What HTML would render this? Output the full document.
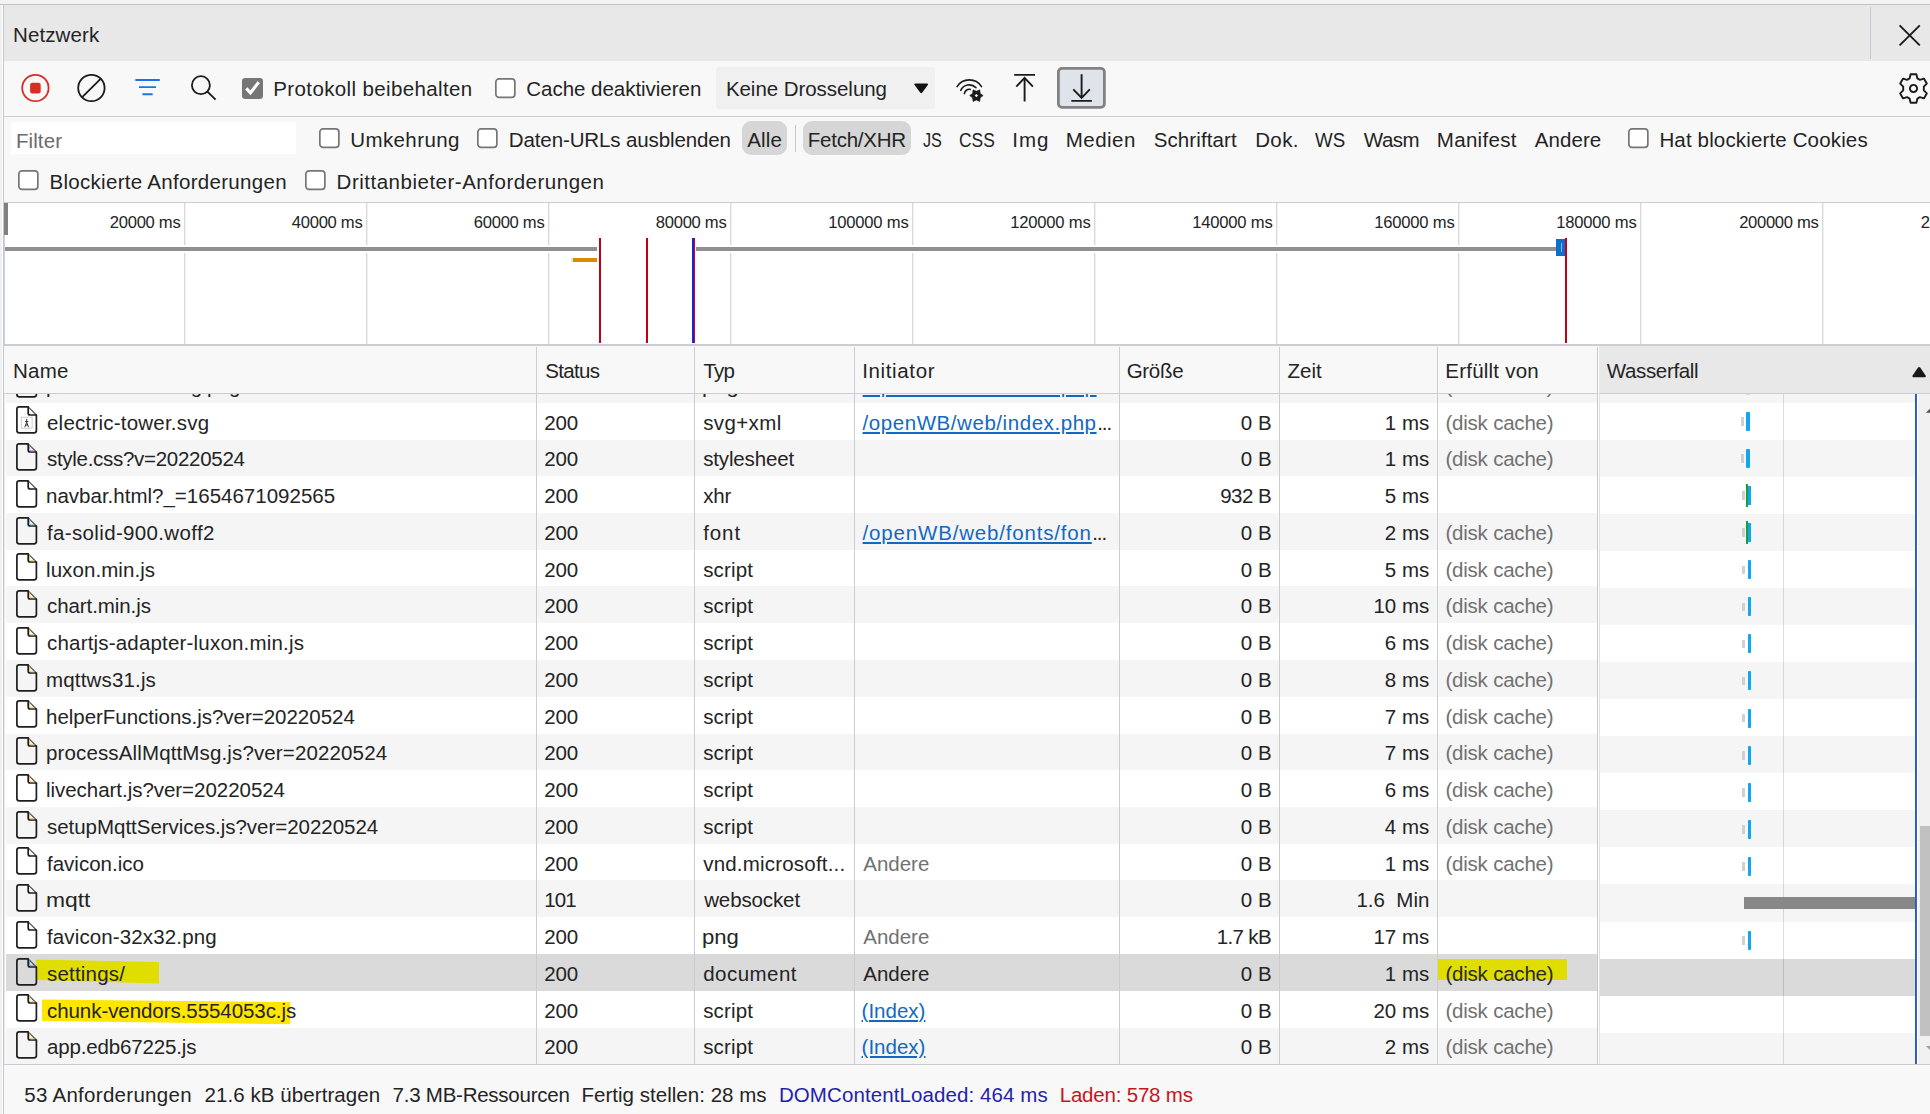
<!DOCTYPE html>
<html><head><meta charset="utf-8"><title>Netzwerk</title>
<style>
html,body{margin:0;padding:0}
body{width:1930px;height:1114px;position:relative;overflow:hidden;background:#fff;font-family:"Liberation Sans", sans-serif;}
body>div,body>svg,body>span{position:absolute;box-sizing:content-box}
.t{line-height:24px;white-space:pre;font-family:"Liberation Sans", sans-serif}
</style></head><body>
<div style="left:0px;top:0px;width:1930px;height:4px;background:#f3f3f3;"></div>
<div style="left:0px;top:4px;width:1930px;height:1px;background:#c2c2c2;"></div>
<div style="left:0px;top:5px;width:2px;height:1109px;background:#f0f0f0;"></div>
<div style="left:3px;top:5px;width:1px;height:1109px;background:#c3c6cc;"></div>
<div style="left:4px;top:5px;width:1px;height:1109px;background:#e6e8ec;"></div>
<div style="left:4px;top:5px;width:1926px;height:56px;background:#e8e8e8;"></div>
<div style="left:1870px;top:7px;width:1px;height:52px;background:#c6c9cf;"></div>
<span class="t" style="left:13.00px;top:22.70px;font-size:20.5px;color:#242424;letter-spacing:0.117px;">Netzwerk</span>
<svg style="left:1897px;top:23px" width="26" height="26" viewBox="0 0 26 26"><path d="M2.6 2.4 L22.8 22.4 M22.8 2.4 L2.6 22.4" stroke="#1b1b1b" stroke-width="1.9" fill="none"/></svg>
<div style="left:4px;top:61px;width:1926px;height:55px;background:#f8f8f8;"></div>
<div style="left:4px;top:116px;width:1926px;height:1px;background:#cbcdd1;"></div>
<svg style="left:19px;top:72px" width="33" height="33" viewBox="0 0 33 33"><circle cx="16.4" cy="16" r="13.2" fill="none" stroke="#d92c25" stroke-width="1.8"/><rect x="11.1" y="10.8" width="10.6" height="10.6" rx="2.2" fill="#d92c25"/></svg>
<svg style="left:75px;top:72px" width="33" height="33" viewBox="0 0 33 33"><circle cx="16.4" cy="16" r="13.2" fill="none" stroke="#1b1b1b" stroke-width="1.8"/><path d="M7.2 25.2 L25.6 6.8" stroke="#1b1b1b" stroke-width="1.8"/></svg>
<svg style="left:132px;top:74px" width="32" height="26" viewBox="0 0 32 26"><path d="M3.3 6 H27.8 M7 13.1 H24 M10.4 20.2 H20.7" stroke="#1a73e8" stroke-width="1.9" fill="none"/></svg>
<svg style="left:186px;top:71px" width="34" height="34" viewBox="0 0 34 34"><circle cx="14.9" cy="14.2" r="9" fill="none" stroke="#1b1b1b" stroke-width="1.8"/><path d="M21.4 20.6 L29.6 28.6" stroke="#1b1b1b" stroke-width="1.9"/></svg>
<svg style="left:242px;top:78px" width="21" height="21" viewBox="0 0 21 21"><rect x="0" y="0" width="21" height="21" rx="3.2" fill="#767676"/><path d="M4.3 10.4 L8.4 14.8 L16.7 4.2" stroke="#fff" stroke-width="3.1" fill="none"/></svg>
<span class="t" style="left:273.30px;top:76.90px;font-size:20.5px;color:#242424;letter-spacing:0.372px;">Protokoll beibehalten</span>
<svg style="left:495px;top:78px" width="21" height="21" viewBox="0 0 21 21"><rect x="0.85" y="0.85" width="19" height="18.6" rx="3.2" fill="#fff" stroke="#767676" stroke-width="1.7"/></svg>
<span class="t" style="left:526.30px;top:76.90px;font-size:20.5px;color:#242424;letter-spacing:-0.029px;">Cache deaktivieren</span>
<div style="left:716px;top:67px;width:219px;height:41.5px;background:#f0f0f0;border-radius:3.5px"></div>
<span class="t" style="left:725.90px;top:76.90px;font-size:20.5px;color:#242424;letter-spacing:-0.048px;">Keine Drosselung</span>
<svg style="left:912px;top:81px" width="18" height="14" viewBox="0 0 18 14"><path d="M3.2 2.4 H15.2 Q16.8 2.4 15.8 3.9 L10.3 11.6 Q9.2 13 8.1 11.6 L2.6 3.9 Q1.6 2.4 3.2 2.4 Z" fill="#111"/></svg>
<svg style="left:955px;top:76px" width="30" height="28" viewBox="0 0 30 28">
<g fill="none" stroke="#1b1b1b" stroke-width="1.6" stroke-linecap="round">
<path d="M2.09 10.67 A14.4 14.4 0 0 1 26.51 10.67"/><path d="M5.78 14.33 A9.4 9.4 0 0 1 20.95 11.65"/><path d="M9.35 17.60 A5.0 5.0 0 0 1 15.17 13.38"/></g>
<g transform="translate(21.4,19.6)"><path d="M6.70 0.00 L3.81 2.20 L3.35 5.80 L0.00 4.40 L-3.35 5.80 L-3.81 2.20 L-6.70 0.00 L-3.81 -2.20 L-3.35 -5.80 L-0.00 -4.40 L3.35 -5.80 L3.81 -2.20 Z" fill="#1b1b1b" stroke="#1b1b1b" stroke-width="0.6" stroke-linejoin="round"/><path d="M0 -1.7 L1.7 0 L0 1.7 L-1.7 0 Z" fill="#f8f8f8"/></g></svg>
<svg style="left:1012px;top:72px" width="26" height="32" viewBox="0 0 26 32"><path d="M2.2 2.9 H23 M12.6 5.6 V29.6 M4.3 14.6 L12.6 5.9 L20.9 14.6" stroke="#1b1b1b" stroke-width="1.9" fill="none"/></svg>
<svg style="left:1057px;top:67px" width="50" height="42" viewBox="0 0 50 42"><rect x="1.4" y="1.4" width="46" height="38.9" rx="3.6" fill="#dfe3ea" stroke="#828282" stroke-width="2.8"/></svg>
<svg style="left:1069px;top:72px" width="26" height="32" viewBox="0 0 26 32"><path d="M12.6 2.2 V26 M4.3 17.4 L12.6 26 L20.8 17.4 M2.3 28.9 H22.9" stroke="#1b1b1b" stroke-width="1.9" fill="none"/></svg>
<svg style="left:1897px;top:72px" width="33" height="33" viewBox="-16.5 -16.5 33 33"><g fill="none" stroke="#1b1b1b" stroke-width="1.9" stroke-linejoin="round">
<path d="M-2.9 -14.2 H2.9 L3.9 -10.1 L6.4 -8.7 L10.4 -9.9 L13.3 -4.9 L10.3 -1.9 V1.9 L13.3 4.9 L10.4 9.9 L6.4 8.7 L3.9 10.1 L2.9 14.2 H-2.9 L-3.9 10.1 L-6.4 8.7 L-10.4 9.9 L-13.3 4.9 L-10.3 1.9 V-1.9 L-13.3 -4.9 L-10.4 -9.9 L-6.4 -8.7 L-3.9 -10.1 Z"/><circle r="3.6"/></g></svg>
<div style="left:4px;top:117px;width:1926px;height:85px;background:#f8f8f8;"></div>
<div style="left:4px;top:202px;width:1926px;height:1px;background:#cbcdd1;"></div>
<div style="left:11px;top:122px;width:285px;height:32px;background:#fff;"></div>
<span class="t" style="left:15.90px;top:128.50px;font-size:20.5px;color:#6b6b6b;letter-spacing:0.114px;">Filter</span>
<svg style="left:319.2px;top:128.2px" width="21" height="21" viewBox="0 0 21 21"><rect x="0.85" y="0.85" width="19" height="18.6" rx="3.2" fill="#fff" stroke="#767676" stroke-width="1.7"/></svg>
<span class="t" style="left:350.20px;top:128.30px;font-size:20.5px;color:#242424;letter-spacing:0.405px;">Umkehrung</span>
<svg style="left:476.9px;top:128.2px" width="21" height="21" viewBox="0 0 21 21"><rect x="0.85" y="0.85" width="19" height="18.6" rx="3.2" fill="#fff" stroke="#767676" stroke-width="1.7"/></svg>
<span class="t" style="left:508.80px;top:128.30px;font-size:20.5px;color:#242424;letter-spacing:-0.115px;">Daten-URLs ausblenden</span>
<div style="left:741.8px;top:121.2px;width:44.8px;height:34.3px;background:#d6d6d6;border-radius:9px"></div>
<span class="t" style="left:747.30px;top:128.30px;font-size:20.5px;color:#242424;letter-spacing:0.106px;">Alle</span>
<div style="left:795px;top:124.5px;width:1px;height:27.5px;background:#c8c8c8;"></div>
<div style="left:803.3px;top:121.2px;width:107.4px;height:34.3px;background:#d6d6d6;border-radius:9px"></div>
<span class="t" style="left:807.80px;top:128.30px;font-size:20.5px;color:#242424;letter-spacing:-0.243px;">Fetch/XHR</span>
<span class="t" style="left:923.10px;top:128.30px;font-size:20.5px;color:#242424;transform:scaleX(0.7914);transform-origin:0 0;">JS</span>
<span class="t" style="left:958.85px;top:128.30px;font-size:20.5px;color:#242424;transform:scaleX(0.8474);transform-origin:0 0;">CSS</span>
<span class="t" style="left:1012.20px;top:128.30px;font-size:20.5px;color:#242424;letter-spacing:1.014px;">Img</span>
<span class="t" style="left:1065.70px;top:128.30px;font-size:20.5px;color:#242424;letter-spacing:0.493px;">Medien</span>
<span class="t" style="left:1153.70px;top:128.30px;font-size:20.5px;color:#242424;letter-spacing:0.108px;">Schriftart</span>
<span class="t" style="left:1255.20px;top:128.30px;font-size:20.5px;color:#242424;letter-spacing:0.381px;">Dok.</span>
<span class="t" style="left:1315.00px;top:128.30px;font-size:20.5px;color:#242424;transform:scaleX(0.9119);transform-origin:0 0;">WS</span>
<span class="t" style="left:1363.80px;top:128.30px;font-size:20.5px;color:#242424;letter-spacing:-0.480px;">Wasm</span>
<span class="t" style="left:1436.80px;top:128.30px;font-size:20.5px;color:#242424;letter-spacing:0.303px;">Manifest</span>
<span class="t" style="left:1534.70px;top:128.30px;font-size:20.5px;color:#242424;letter-spacing:0.079px;">Andere</span>
<svg style="left:1628.3px;top:128.2px" width="21" height="21" viewBox="0 0 21 21"><rect x="0.85" y="0.85" width="19" height="18.6" rx="3.2" fill="#fff" stroke="#767676" stroke-width="1.7"/></svg>
<span class="t" style="left:1659.40px;top:128.30px;font-size:20.5px;color:#242424;letter-spacing:0.150px;">Hat blockierte Cookies</span>
<svg style="left:18.2px;top:170.3px" width="21" height="21" viewBox="0 0 21 21"><rect x="0.85" y="0.85" width="19" height="18.6" rx="3.2" fill="#fff" stroke="#767676" stroke-width="1.7"/></svg>
<span class="t" style="left:49.50px;top:169.80px;font-size:20.5px;color:#242424;letter-spacing:0.298px;">Blockierte Anforderungen</span>
<svg style="left:305.2px;top:170.3px" width="21" height="21" viewBox="0 0 21 21"><rect x="0.85" y="0.85" width="19" height="18.6" rx="3.2" fill="#fff" stroke="#767676" stroke-width="1.7"/></svg>
<span class="t" style="left:336.60px;top:169.80px;font-size:20.5px;color:#242424;letter-spacing:0.507px;">Drittanbieter-Anforderungen</span>
<div style="left:4px;top:203px;width:1926px;height:141px;background:#fff;"></div>
<div style="left:4px;top:344px;width:1926px;height:2px;background:#cbcdd1;"></div>
<div style="left:184px;top:203px;width:1px;height:141px;background:#d9d9d9;"></div>
<div style="left:185px;top:203px;width:1px;height:141px;background:#f0f0f0;"></div>
<span class="t" style="left:109.80px;top:211.15px;font-size:16.6px;color:#242424;letter-spacing:-0.282px;">20000 ms</span>
<div style="left:366px;top:203px;width:1px;height:141px;background:#d9d9d9;"></div>
<div style="left:367px;top:203px;width:1px;height:141px;background:#f0f0f0;"></div>
<span class="t" style="left:291.80px;top:211.15px;font-size:16.6px;color:#242424;letter-spacing:-0.282px;">40000 ms</span>
<div style="left:548px;top:203px;width:1px;height:141px;background:#d9d9d9;"></div>
<div style="left:549px;top:203px;width:1px;height:141px;background:#f0f0f0;"></div>
<span class="t" style="left:473.80px;top:211.15px;font-size:16.6px;color:#242424;letter-spacing:-0.282px;">60000 ms</span>
<div style="left:730px;top:203px;width:1px;height:141px;background:#d9d9d9;"></div>
<div style="left:731px;top:203px;width:1px;height:141px;background:#f0f0f0;"></div>
<span class="t" style="left:655.80px;top:211.15px;font-size:16.6px;color:#242424;letter-spacing:-0.282px;">80000 ms</span>
<div style="left:912px;top:203px;width:1px;height:141px;background:#d9d9d9;"></div>
<div style="left:913px;top:203px;width:1px;height:141px;background:#f0f0f0;"></div>
<span class="t" style="left:828.20px;top:211.15px;font-size:16.6px;color:#242424;letter-spacing:-0.201px;">100000 ms</span>
<div style="left:1094px;top:203px;width:1px;height:141px;background:#d9d9d9;"></div>
<div style="left:1095px;top:203px;width:1px;height:141px;background:#f0f0f0;"></div>
<span class="t" style="left:1010.20px;top:211.15px;font-size:16.6px;color:#242424;letter-spacing:-0.201px;">120000 ms</span>
<div style="left:1276px;top:203px;width:1px;height:141px;background:#d9d9d9;"></div>
<div style="left:1277px;top:203px;width:1px;height:141px;background:#f0f0f0;"></div>
<span class="t" style="left:1192.20px;top:211.15px;font-size:16.6px;color:#242424;letter-spacing:-0.201px;">140000 ms</span>
<div style="left:1458px;top:203px;width:1px;height:141px;background:#d9d9d9;"></div>
<div style="left:1459px;top:203px;width:1px;height:141px;background:#f0f0f0;"></div>
<span class="t" style="left:1374.20px;top:211.15px;font-size:16.6px;color:#242424;letter-spacing:-0.201px;">160000 ms</span>
<div style="left:1640px;top:203px;width:1px;height:141px;background:#d9d9d9;"></div>
<div style="left:1641px;top:203px;width:1px;height:141px;background:#f0f0f0;"></div>
<span class="t" style="left:1556.20px;top:211.15px;font-size:16.6px;color:#242424;letter-spacing:-0.201px;">180000 ms</span>
<div style="left:1822px;top:203px;width:1px;height:141px;background:#d9d9d9;"></div>
<div style="left:1823px;top:203px;width:1px;height:141px;background:#f0f0f0;"></div>
<span class="t" style="left:1739.20px;top:211.15px;font-size:16.6px;color:#242424;letter-spacing:-0.326px;">200000 ms</span>
<span class="t" style="left:1920.70px;top:211.15px;font-size:16.6px;color:#242424;letter-spacing:0.000px;">2</span>
<div style="left:4px;top:245px;width:593px;height:2px;background:#fff;"></div>
<div style="left:4px;top:251px;width:593px;height:2px;background:#fff;"></div>
<div style="left:695.5px;top:245px;width:861px;height:2px;background:#fff;"></div>
<div style="left:695.5px;top:251px;width:861px;height:2px;background:#fff;"></div>
<div style="left:4px;top:247px;width:593px;height:4px;background:#909090;"></div>
<div style="left:695.5px;top:247px;width:861px;height:4px;background:#909090;"></div>
<div style="left:4px;top:203px;width:4px;height:32px;background:#808080;"></div>
<div style="left:4px;top:235px;width:1px;height:109px;background:#c3d4ee;"></div>
<div style="left:570.5px;top:258px;width:2.5px;height:4px;background:#d6e6ea;"></div>
<div style="left:573px;top:258px;width:24px;height:4px;background:#dd8a00;"></div>
<div style="left:599px;top:238px;width:2px;height:105px;background:#c00018;"></div>
<div style="left:646px;top:238px;width:2px;height:105px;background:#c00018;"></div>
<div style="left:692px;top:238px;width:1.6px;height:105px;background:#2222c8;"></div>
<div style="left:693.6px;top:238px;width:1.6px;height:105px;background:#d00020;"></div>
<div style="left:1556px;top:239px;width:9px;height:17px;background:#0b6fd0;"></div>
<div style="left:1560.5px;top:242.5px;width:1.2px;height:9px;background:#9ab0c0;"></div>
<div style="left:1564.8px;top:238px;width:2px;height:105px;background:#c00018;"></div>
<div style="left:6px;top:380px;width:1591px;height:22.75px;background:#f5f5f5;"></div>
<div style="left:1600px;top:380px;width:315px;height:22.80000000000001px;background:#f5f5f5;"></div>
<svg style="left:16.4px;top:369.5px" width="22" height="28" viewBox="0 0 22 28"><path d="M12.2 0.9 L20.4 9" fill="none" stroke="#4a4a4a" stroke-width="1.1"/><path d="M12.2 0.9 H3.2 Q0.9 0.9 0.9 3.2 V24.6 Q0.9 26.9 3.2 26.9 H18.1 Q20.4 26.9 20.4 24.6 V9 H14.2 Q12.2 9 12.2 7 Z" fill="none" stroke="#1e1e1e" stroke-width="1.7" stroke-linejoin="round"/></svg>
<span class="t" style="left:46.00px;top:373.90px;font-size:20.5px;color:#242424;letter-spacing:-0.385px;">power-connecting.png</span>
<span class="t" style="left:544.30px;top:373.90px;font-size:20.5px;color:#242424;letter-spacing:-0.201px;">200</span>
<span class="t" style="left:702.12px;top:373.90px;font-size:20.5px;color:#242424;transform:scaleX(1.0792);transform-origin:0 0;">png</span>
<span class="t" style="left:862.60px;top:373.90px;font-size:20.5px;color:#1369bf;letter-spacing:0.559px;text-decoration:underline;text-decoration-thickness:1.5px;text-underline-offset:1.8px">/openWB/web/index.php</span>
<span class="t" style="left:1097.20px;top:373.90px;font-size:20.5px;color:#222;letter-spacing:-1.096px;">...</span>
<span class="t" style="left:1240.80px;top:373.90px;font-size:20.5px;color:#242424;letter-spacing:0.000px;">0 B</span>
<span class="t" style="left:1384.83px;top:373.90px;font-size:20.5px;color:#242424;letter-spacing:0.000px;">1 ms</span>
<span class="t" style="left:1445.40px;top:373.90px;font-size:20.5px;color:#717171;letter-spacing:-0.207px;">(disk cache)</span>
<div style="left:1745.6px;top:380px;width:4.1px;height:15px;background:#bfe6fb;"></div>
<div style="left:4px;top:346px;width:1594px;height:47px;background:#f8f8f8;"></div>
<div style="left:1599px;top:346px;width:331px;height:47px;background:#e8e8e8;"></div>
<div style="left:4px;top:393px;width:1926px;height:1px;background:#cbcdd1;"></div>
<span class="t" style="left:13.10px;top:358.80px;font-size:20.5px;color:#242424;letter-spacing:0.206px;">Name</span>
<span class="t" style="left:545.30px;top:358.80px;font-size:20.5px;color:#242424;letter-spacing:-0.693px;">Status</span>
<span class="t" style="left:703.40px;top:358.80px;font-size:20.5px;color:#242424;letter-spacing:-0.771px;">Typ</span>
<span class="t" style="left:862.20px;top:358.80px;font-size:20.5px;color:#242424;letter-spacing:0.638px;">Initiator</span>
<span class="t" style="left:1126.70px;top:358.80px;font-size:20.5px;color:#242424;letter-spacing:-0.299px;">Größe</span>
<span class="t" style="left:1287.60px;top:358.80px;font-size:20.5px;color:#242424;letter-spacing:-0.026px;">Zeit</span>
<span class="t" style="left:1445.30px;top:358.80px;font-size:20.5px;color:#242424;letter-spacing:0.225px;">Erfüllt von</span>
<span class="t" style="left:1606.70px;top:359.40px;font-size:20.5px;color:#242424;letter-spacing:-0.330px;">Wasserfall</span>
<svg style="left:1910px;top:365px" width="18" height="14" viewBox="0 0 18 14"><path d="M3.4 12.2 H14.8 Q16.6 12.2 15.6 10.6 L10.2 2.6 Q9.1 1.2 8 2.6 L2.6 10.6 Q1.6 12.2 3.4 12.2 Z" fill="#1a1a1a"/></svg>
<div style="left:6px;top:403px;width:1591px;height:37px;background:#fff;"></div>
<div style="left:1600px;top:403px;width:315px;height:37px;background:#fff;"></div>
<div style="left:6px;top:440px;width:1591px;height:36px;background:#f5f5f5;"></div>
<div style="left:1600px;top:440px;width:315px;height:37px;background:#f5f5f5;"></div>
<div style="left:6px;top:476px;width:1591px;height:37px;background:#fff;"></div>
<div style="left:1600px;top:477px;width:315px;height:37px;background:#fff;"></div>
<div style="left:6px;top:513px;width:1591px;height:37px;background:#f5f5f5;"></div>
<div style="left:1600px;top:514px;width:315px;height:37px;background:#f5f5f5;"></div>
<div style="left:6px;top:550px;width:1591px;height:36px;background:#fff;"></div>
<div style="left:1600px;top:551px;width:315px;height:37px;background:#fff;"></div>
<div style="left:6px;top:586px;width:1591px;height:37px;background:#f5f5f5;"></div>
<div style="left:1600px;top:588px;width:315px;height:37px;background:#f5f5f5;"></div>
<div style="left:6px;top:623px;width:1591px;height:37px;background:#fff;"></div>
<div style="left:1600px;top:625px;width:315px;height:37px;background:#fff;"></div>
<div style="left:6px;top:660px;width:1591px;height:37px;background:#f5f5f5;"></div>
<div style="left:1600px;top:662px;width:315px;height:37px;background:#f5f5f5;"></div>
<div style="left:6px;top:697px;width:1591px;height:37px;background:#fff;"></div>
<div style="left:1600px;top:699px;width:315px;height:37px;background:#fff;"></div>
<div style="left:6px;top:734px;width:1591px;height:36px;background:#f5f5f5;"></div>
<div style="left:1600px;top:736px;width:315px;height:37px;background:#f5f5f5;"></div>
<div style="left:6px;top:770px;width:1591px;height:37px;background:#fff;"></div>
<div style="left:1600px;top:773px;width:315px;height:37px;background:#fff;"></div>
<div style="left:6px;top:807px;width:1591px;height:37px;background:#f5f5f5;"></div>
<div style="left:1600px;top:810px;width:315px;height:37px;background:#f5f5f5;"></div>
<div style="left:6px;top:844px;width:1591px;height:36px;background:#fff;"></div>
<div style="left:1600px;top:847px;width:315px;height:37px;background:#fff;"></div>
<div style="left:6px;top:880px;width:1591px;height:37px;background:#f5f5f5;"></div>
<div style="left:1600px;top:884px;width:315px;height:38px;background:#f5f5f5;"></div>
<div style="left:6px;top:917px;width:1591px;height:37px;background:#fff;"></div>
<div style="left:1600px;top:922px;width:315px;height:37px;background:#fff;"></div>
<div style="left:6px;top:954px;width:1591px;height:37px;background:#dadada;"></div>
<div style="left:1600px;top:959px;width:315px;height:37px;background:#dadada;"></div>
<div style="left:6px;top:991px;width:1591px;height:37px;background:#fff;"></div>
<div style="left:1600px;top:996px;width:315px;height:37px;background:#fff;"></div>
<div style="left:6px;top:1028px;width:1591px;height:36px;background:#f5f5f5;"></div>
<div style="left:1600px;top:1033px;width:315px;height:31px;background:#f5f5f5;"></div>
<svg style="left:0;top:950px" width="320" height="90" viewBox="0 950 320 90"><path d="M36 959.5 L159 962 L159 983.5 L36 980 Z" fill="#e0de00"/><path d="M42 999.5 L290.3 1002 L290.3 1024.2 L42 1021 Z" fill="#ffe600"/></svg>
<div style="left:1436.5px;top:959px;width:130.5px;height:21px;background:#e0de00;"></div>
<svg style="left:16.4px;top:406.25px" width="22" height="28" viewBox="0 0 22 28"><path d="M12.2 0.9 L20.4 9" fill="none" stroke="#4a4a4a" stroke-width="1.1"/><path d="M12.2 0.9 H3.2 Q0.9 0.9 0.9 3.2 V24.6 Q0.9 26.9 3.2 26.9 H18.1 Q20.4 26.9 20.4 24.6 V9 H14.2 Q12.2 9 12.2 7 Z" fill="none" stroke="#1e1e1e" stroke-width="1.7" stroke-linejoin="round"/><rect x="5.3" y="11.2" width="10.8" height="11" fill="#fff" stroke="#c4c4c4" stroke-width="0.8"/><path d="M10.7 13 V16.5 M9 15.6 L12.4 15.6 M8.8 21.2 L10.7 16.5 L12.6 21.2 M9.6 19 H11.8" stroke="#333" stroke-width="1" fill="none"/></svg>
<span class="t" style="left:47.00px;top:410.65px;font-size:20.5px;color:#242424;letter-spacing:0.220px;">electric-tower.svg</span>
<span class="t" style="left:544.30px;top:410.65px;font-size:20.5px;color:#242424;letter-spacing:-0.201px;">200</span>
<span class="t" style="left:703.20px;top:410.65px;font-size:20.5px;color:#242424;letter-spacing:0.383px;">svg+xml</span>
<span class="t" style="left:862.60px;top:410.65px;font-size:20.5px;color:#1369bf;letter-spacing:0.559px;text-decoration:underline;text-decoration-thickness:1.5px;text-underline-offset:1.8px">/openWB/web/index.php</span>
<span class="t" style="left:1097.20px;top:410.65px;font-size:20.5px;color:#222;letter-spacing:-1.096px;">...</span>
<span class="t" style="left:1240.80px;top:410.65px;font-size:20.5px;color:#242424;letter-spacing:0.000px;">0 B</span>
<span class="t" style="left:1384.83px;top:410.65px;font-size:20.5px;color:#242424;letter-spacing:0.000px;">1 ms</span>
<span class="t" style="left:1445.40px;top:410.65px;font-size:20.5px;color:#717171;letter-spacing:-0.207px;">(disk cache)</span>
<svg style="left:16.4px;top:443.0px" width="22" height="28" viewBox="0 0 22 28"><path d="M12.2 0.9 L20.4 9" fill="none" stroke="#4a4a4a" stroke-width="1.1"/><path d="M12.2 0.9 H3.2 Q0.9 0.9 0.9 3.2 V24.6 Q0.9 26.9 3.2 26.9 H18.1 Q20.4 26.9 20.4 24.6 V9 H14.2 Q12.2 9 12.2 7 Z" fill="none" stroke="#1e1e1e" stroke-width="1.7" stroke-linejoin="round"/><path d="M13.6 2.4 V6.6 Q13.6 7.8 14.8 7.8 H18.6" stroke="#c070f0" stroke-width="1" stroke-opacity="0.85" fill="none"/></svg>
<span class="t" style="left:47.00px;top:447.40px;font-size:20.5px;color:#242424;letter-spacing:-0.291px;">style.css?v=20220524</span>
<span class="t" style="left:544.30px;top:447.40px;font-size:20.5px;color:#242424;letter-spacing:-0.201px;">200</span>
<span class="t" style="left:703.20px;top:447.40px;font-size:20.5px;color:#242424;letter-spacing:-0.145px;">stylesheet</span>
<span class="t" style="left:1240.80px;top:447.40px;font-size:20.5px;color:#242424;letter-spacing:0.000px;">0 B</span>
<span class="t" style="left:1384.83px;top:447.40px;font-size:20.5px;color:#242424;letter-spacing:0.000px;">1 ms</span>
<span class="t" style="left:1445.40px;top:447.40px;font-size:20.5px;color:#717171;letter-spacing:-0.207px;">(disk cache)</span>
<svg style="left:16.4px;top:479.75px" width="22" height="28" viewBox="0 0 22 28"><path d="M12.2 0.9 L20.4 9" fill="none" stroke="#4a4a4a" stroke-width="1.1"/><path d="M12.2 0.9 H3.2 Q0.9 0.9 0.9 3.2 V24.6 Q0.9 26.9 3.2 26.9 H18.1 Q20.4 26.9 20.4 24.6 V9 H14.2 Q12.2 9 12.2 7 Z" fill="none" stroke="#1e1e1e" stroke-width="1.7" stroke-linejoin="round"/></svg>
<span class="t" style="left:46.00px;top:484.15px;font-size:20.5px;color:#242424;letter-spacing:0.005px;">navbar.html?_=1654671092565</span>
<span class="t" style="left:544.30px;top:484.15px;font-size:20.5px;color:#242424;letter-spacing:-0.201px;">200</span>
<span class="t" style="left:703.20px;top:484.15px;font-size:20.5px;color:#242424;letter-spacing:-0.176px;">xhr</span>
<span class="t" style="left:1220.20px;top:484.15px;font-size:20.5px;color:#242424;letter-spacing:-0.550px;">932 B</span>
<span class="t" style="left:1384.83px;top:484.15px;font-size:20.5px;color:#242424;letter-spacing:0.000px;">5 ms</span>
<svg style="left:16.4px;top:516.5px" width="22" height="28" viewBox="0 0 22 28"><path d="M12.2 0.9 L20.4 9" fill="none" stroke="#4a4a4a" stroke-width="1.1"/><path d="M12.2 0.9 H3.2 Q0.9 0.9 0.9 3.2 V24.6 Q0.9 26.9 3.2 26.9 H18.1 Q20.4 26.9 20.4 24.6 V9 H14.2 Q12.2 9 12.2 7 Z" fill="none" stroke="#1e1e1e" stroke-width="1.7" stroke-linejoin="round"/><path d="M13.6 2.4 V6.6 Q13.6 7.8 14.8 7.8 H18.6" stroke="#5ab8e8" stroke-width="1" stroke-opacity="0.85" fill="none"/></svg>
<span class="t" style="left:47.00px;top:520.90px;font-size:20.5px;color:#242424;letter-spacing:0.351px;">fa-solid-900.woff2</span>
<span class="t" style="left:544.30px;top:520.90px;font-size:20.5px;color:#242424;letter-spacing:-0.201px;">200</span>
<span class="t" style="left:703.20px;top:520.90px;font-size:20.5px;color:#242424;letter-spacing:0.901px;">font</span>
<span class="t" style="left:862.60px;top:520.90px;font-size:20.5px;color:#1369bf;letter-spacing:0.822px;text-decoration:underline;text-decoration-thickness:1.5px;text-underline-offset:1.8px">/openWB/web/fonts/fon</span>
<span class="t" style="left:1092.20px;top:520.90px;font-size:20.5px;color:#222;letter-spacing:-1.096px;">...</span>
<span class="t" style="left:1240.80px;top:520.90px;font-size:20.5px;color:#242424;letter-spacing:0.000px;">0 B</span>
<span class="t" style="left:1384.83px;top:520.90px;font-size:20.5px;color:#242424;letter-spacing:0.000px;">2 ms</span>
<span class="t" style="left:1445.40px;top:520.90px;font-size:20.5px;color:#717171;letter-spacing:-0.207px;">(disk cache)</span>
<svg style="left:16.4px;top:553.25px" width="22" height="28" viewBox="0 0 22 28"><path d="M12.2 0.9 L20.4 9" fill="none" stroke="#4a4a4a" stroke-width="1.1"/><path d="M12.2 0.9 H3.2 Q0.9 0.9 0.9 3.2 V24.6 Q0.9 26.9 3.2 26.9 H18.1 Q20.4 26.9 20.4 24.6 V9 H14.2 Q12.2 9 12.2 7 Z" fill="none" stroke="#1e1e1e" stroke-width="1.7" stroke-linejoin="round"/><path d="M13.6 2.4 V6.6 Q13.6 7.8 14.8 7.8 H18.6" stroke="#f0c040" stroke-width="1" stroke-opacity="0.85" fill="none"/></svg>
<span class="t" style="left:46.00px;top:557.65px;font-size:20.5px;color:#242424;letter-spacing:0.074px;">luxon.min.js</span>
<span class="t" style="left:544.30px;top:557.65px;font-size:20.5px;color:#242424;letter-spacing:-0.201px;">200</span>
<span class="t" style="left:703.20px;top:557.65px;font-size:20.5px;color:#242424;letter-spacing:0.164px;">script</span>
<span class="t" style="left:1240.80px;top:557.65px;font-size:20.5px;color:#242424;letter-spacing:0.000px;">0 B</span>
<span class="t" style="left:1384.83px;top:557.65px;font-size:20.5px;color:#242424;letter-spacing:0.000px;">5 ms</span>
<span class="t" style="left:1445.40px;top:557.65px;font-size:20.5px;color:#717171;letter-spacing:-0.207px;">(disk cache)</span>
<svg style="left:16.4px;top:590.0px" width="22" height="28" viewBox="0 0 22 28"><path d="M12.2 0.9 L20.4 9" fill="none" stroke="#4a4a4a" stroke-width="1.1"/><path d="M12.2 0.9 H3.2 Q0.9 0.9 0.9 3.2 V24.6 Q0.9 26.9 3.2 26.9 H18.1 Q20.4 26.9 20.4 24.6 V9 H14.2 Q12.2 9 12.2 7 Z" fill="none" stroke="#1e1e1e" stroke-width="1.7" stroke-linejoin="round"/><path d="M13.6 2.4 V6.6 Q13.6 7.8 14.8 7.8 H18.6" stroke="#f0c040" stroke-width="1" stroke-opacity="0.85" fill="none"/></svg>
<span class="t" style="left:47.00px;top:594.40px;font-size:20.5px;color:#242424;letter-spacing:-0.077px;">chart.min.js</span>
<span class="t" style="left:544.30px;top:594.40px;font-size:20.5px;color:#242424;letter-spacing:-0.201px;">200</span>
<span class="t" style="left:703.20px;top:594.40px;font-size:20.5px;color:#242424;letter-spacing:0.164px;">script</span>
<span class="t" style="left:1240.80px;top:594.40px;font-size:20.5px;color:#242424;letter-spacing:0.000px;">0 B</span>
<span class="t" style="left:1373.43px;top:594.40px;font-size:20.5px;color:#242424;letter-spacing:0.000px;">10 ms</span>
<span class="t" style="left:1445.40px;top:594.40px;font-size:20.5px;color:#717171;letter-spacing:-0.207px;">(disk cache)</span>
<svg style="left:16.4px;top:626.75px" width="22" height="28" viewBox="0 0 22 28"><path d="M12.2 0.9 L20.4 9" fill="none" stroke="#4a4a4a" stroke-width="1.1"/><path d="M12.2 0.9 H3.2 Q0.9 0.9 0.9 3.2 V24.6 Q0.9 26.9 3.2 26.9 H18.1 Q20.4 26.9 20.4 24.6 V9 H14.2 Q12.2 9 12.2 7 Z" fill="none" stroke="#1e1e1e" stroke-width="1.7" stroke-linejoin="round"/><path d="M13.6 2.4 V6.6 Q13.6 7.8 14.8 7.8 H18.6" stroke="#f0c040" stroke-width="1" stroke-opacity="0.85" fill="none"/></svg>
<span class="t" style="left:47.00px;top:631.15px;font-size:20.5px;color:#242424;letter-spacing:0.191px;">chartjs-adapter-luxon.min.js</span>
<span class="t" style="left:544.30px;top:631.15px;font-size:20.5px;color:#242424;letter-spacing:-0.201px;">200</span>
<span class="t" style="left:703.20px;top:631.15px;font-size:20.5px;color:#242424;letter-spacing:0.164px;">script</span>
<span class="t" style="left:1240.80px;top:631.15px;font-size:20.5px;color:#242424;letter-spacing:0.000px;">0 B</span>
<span class="t" style="left:1384.83px;top:631.15px;font-size:20.5px;color:#242424;letter-spacing:0.000px;">6 ms</span>
<span class="t" style="left:1445.40px;top:631.15px;font-size:20.5px;color:#717171;letter-spacing:-0.207px;">(disk cache)</span>
<svg style="left:16.4px;top:663.5px" width="22" height="28" viewBox="0 0 22 28"><path d="M12.2 0.9 L20.4 9" fill="none" stroke="#4a4a4a" stroke-width="1.1"/><path d="M12.2 0.9 H3.2 Q0.9 0.9 0.9 3.2 V24.6 Q0.9 26.9 3.2 26.9 H18.1 Q20.4 26.9 20.4 24.6 V9 H14.2 Q12.2 9 12.2 7 Z" fill="none" stroke="#1e1e1e" stroke-width="1.7" stroke-linejoin="round"/><path d="M13.6 2.4 V6.6 Q13.6 7.8 14.8 7.8 H18.6" stroke="#f0c040" stroke-width="1" stroke-opacity="0.85" fill="none"/></svg>
<span class="t" style="left:46.00px;top:667.90px;font-size:20.5px;color:#242424;letter-spacing:0.162px;">mqttws31.js</span>
<span class="t" style="left:544.30px;top:667.90px;font-size:20.5px;color:#242424;letter-spacing:-0.201px;">200</span>
<span class="t" style="left:703.20px;top:667.90px;font-size:20.5px;color:#242424;letter-spacing:0.164px;">script</span>
<span class="t" style="left:1240.80px;top:667.90px;font-size:20.5px;color:#242424;letter-spacing:0.000px;">0 B</span>
<span class="t" style="left:1384.83px;top:667.90px;font-size:20.5px;color:#242424;letter-spacing:0.000px;">8 ms</span>
<span class="t" style="left:1445.40px;top:667.90px;font-size:20.5px;color:#717171;letter-spacing:-0.207px;">(disk cache)</span>
<svg style="left:16.4px;top:700.25px" width="22" height="28" viewBox="0 0 22 28"><path d="M12.2 0.9 L20.4 9" fill="none" stroke="#4a4a4a" stroke-width="1.1"/><path d="M12.2 0.9 H3.2 Q0.9 0.9 0.9 3.2 V24.6 Q0.9 26.9 3.2 26.9 H18.1 Q20.4 26.9 20.4 24.6 V9 H14.2 Q12.2 9 12.2 7 Z" fill="none" stroke="#1e1e1e" stroke-width="1.7" stroke-linejoin="round"/><path d="M13.6 2.4 V6.6 Q13.6 7.8 14.8 7.8 H18.6" stroke="#f0c040" stroke-width="1" stroke-opacity="0.85" fill="none"/></svg>
<span class="t" style="left:46.00px;top:704.65px;font-size:20.5px;color:#242424;letter-spacing:-0.021px;">helperFunctions.js?ver=20220524</span>
<span class="t" style="left:544.30px;top:704.65px;font-size:20.5px;color:#242424;letter-spacing:-0.201px;">200</span>
<span class="t" style="left:703.20px;top:704.65px;font-size:20.5px;color:#242424;letter-spacing:0.164px;">script</span>
<span class="t" style="left:1240.80px;top:704.65px;font-size:20.5px;color:#242424;letter-spacing:0.000px;">0 B</span>
<span class="t" style="left:1384.83px;top:704.65px;font-size:20.5px;color:#242424;letter-spacing:0.000px;">7 ms</span>
<span class="t" style="left:1445.40px;top:704.65px;font-size:20.5px;color:#717171;letter-spacing:-0.207px;">(disk cache)</span>
<svg style="left:16.4px;top:737.0px" width="22" height="28" viewBox="0 0 22 28"><path d="M12.2 0.9 L20.4 9" fill="none" stroke="#4a4a4a" stroke-width="1.1"/><path d="M12.2 0.9 H3.2 Q0.9 0.9 0.9 3.2 V24.6 Q0.9 26.9 3.2 26.9 H18.1 Q20.4 26.9 20.4 24.6 V9 H14.2 Q12.2 9 12.2 7 Z" fill="none" stroke="#1e1e1e" stroke-width="1.7" stroke-linejoin="round"/><path d="M13.6 2.4 V6.6 Q13.6 7.8 14.8 7.8 H18.6" stroke="#f0c040" stroke-width="1" stroke-opacity="0.85" fill="none"/></svg>
<span class="t" style="left:46.00px;top:741.40px;font-size:20.5px;color:#242424;letter-spacing:0.137px;">processAllMqttMsg.js?ver=20220524</span>
<span class="t" style="left:544.30px;top:741.40px;font-size:20.5px;color:#242424;letter-spacing:-0.201px;">200</span>
<span class="t" style="left:703.20px;top:741.40px;font-size:20.5px;color:#242424;letter-spacing:0.164px;">script</span>
<span class="t" style="left:1240.80px;top:741.40px;font-size:20.5px;color:#242424;letter-spacing:0.000px;">0 B</span>
<span class="t" style="left:1384.83px;top:741.40px;font-size:20.5px;color:#242424;letter-spacing:0.000px;">7 ms</span>
<span class="t" style="left:1445.40px;top:741.40px;font-size:20.5px;color:#717171;letter-spacing:-0.207px;">(disk cache)</span>
<svg style="left:16.4px;top:773.75px" width="22" height="28" viewBox="0 0 22 28"><path d="M12.2 0.9 L20.4 9" fill="none" stroke="#4a4a4a" stroke-width="1.1"/><path d="M12.2 0.9 H3.2 Q0.9 0.9 0.9 3.2 V24.6 Q0.9 26.9 3.2 26.9 H18.1 Q20.4 26.9 20.4 24.6 V9 H14.2 Q12.2 9 12.2 7 Z" fill="none" stroke="#1e1e1e" stroke-width="1.7" stroke-linejoin="round"/><path d="M13.6 2.4 V6.6 Q13.6 7.8 14.8 7.8 H18.6" stroke="#f0c040" stroke-width="1" stroke-opacity="0.85" fill="none"/></svg>
<span class="t" style="left:46.00px;top:778.15px;font-size:20.5px;color:#242424;letter-spacing:-0.037px;">livechart.js?ver=20220524</span>
<span class="t" style="left:544.30px;top:778.15px;font-size:20.5px;color:#242424;letter-spacing:-0.201px;">200</span>
<span class="t" style="left:703.20px;top:778.15px;font-size:20.5px;color:#242424;letter-spacing:0.164px;">script</span>
<span class="t" style="left:1240.80px;top:778.15px;font-size:20.5px;color:#242424;letter-spacing:0.000px;">0 B</span>
<span class="t" style="left:1384.83px;top:778.15px;font-size:20.5px;color:#242424;letter-spacing:0.000px;">6 ms</span>
<span class="t" style="left:1445.40px;top:778.15px;font-size:20.5px;color:#717171;letter-spacing:-0.207px;">(disk cache)</span>
<svg style="left:16.4px;top:810.5px" width="22" height="28" viewBox="0 0 22 28"><path d="M12.2 0.9 L20.4 9" fill="none" stroke="#4a4a4a" stroke-width="1.1"/><path d="M12.2 0.9 H3.2 Q0.9 0.9 0.9 3.2 V24.6 Q0.9 26.9 3.2 26.9 H18.1 Q20.4 26.9 20.4 24.6 V9 H14.2 Q12.2 9 12.2 7 Z" fill="none" stroke="#1e1e1e" stroke-width="1.7" stroke-linejoin="round"/><path d="M13.6 2.4 V6.6 Q13.6 7.8 14.8 7.8 H18.6" stroke="#f0c040" stroke-width="1" stroke-opacity="0.85" fill="none"/></svg>
<span class="t" style="left:47.00px;top:814.90px;font-size:20.5px;color:#242424;letter-spacing:-0.031px;">setupMqttServices.js?ver=20220524</span>
<span class="t" style="left:544.30px;top:814.90px;font-size:20.5px;color:#242424;letter-spacing:-0.201px;">200</span>
<span class="t" style="left:703.20px;top:814.90px;font-size:20.5px;color:#242424;letter-spacing:0.164px;">script</span>
<span class="t" style="left:1240.80px;top:814.90px;font-size:20.5px;color:#242424;letter-spacing:0.000px;">0 B</span>
<span class="t" style="left:1384.83px;top:814.90px;font-size:20.5px;color:#242424;letter-spacing:0.000px;">4 ms</span>
<span class="t" style="left:1445.40px;top:814.90px;font-size:20.5px;color:#717171;letter-spacing:-0.207px;">(disk cache)</span>
<svg style="left:16.4px;top:847.25px" width="22" height="28" viewBox="0 0 22 28"><path d="M12.2 0.9 L20.4 9" fill="none" stroke="#4a4a4a" stroke-width="1.1"/><path d="M12.2 0.9 H3.2 Q0.9 0.9 0.9 3.2 V24.6 Q0.9 26.9 3.2 26.9 H18.1 Q20.4 26.9 20.4 24.6 V9 H14.2 Q12.2 9 12.2 7 Z" fill="none" stroke="#1e1e1e" stroke-width="1.7" stroke-linejoin="round"/></svg>
<span class="t" style="left:47.00px;top:851.65px;font-size:20.5px;color:#242424;letter-spacing:0.005px;">favicon.ico</span>
<span class="t" style="left:544.30px;top:851.65px;font-size:20.5px;color:#242424;letter-spacing:-0.201px;">200</span>
<span class="t" style="left:703.20px;top:851.65px;font-size:20.5px;color:#242424;letter-spacing:0.201px;">vnd.microsoft...</span>
<span class="t" style="left:863.30px;top:851.65px;font-size:20.5px;color:#717171;letter-spacing:-0.021px;">Andere</span>
<span class="t" style="left:1240.80px;top:851.65px;font-size:20.5px;color:#242424;letter-spacing:0.000px;">0 B</span>
<span class="t" style="left:1384.83px;top:851.65px;font-size:20.5px;color:#242424;letter-spacing:0.000px;">1 ms</span>
<span class="t" style="left:1445.40px;top:851.65px;font-size:20.5px;color:#717171;letter-spacing:-0.207px;">(disk cache)</span>
<svg style="left:16.4px;top:884.0px" width="22" height="28" viewBox="0 0 22 28"><path d="M12.2 0.9 L20.4 9" fill="none" stroke="#4a4a4a" stroke-width="1.1"/><path d="M12.2 0.9 H3.2 Q0.9 0.9 0.9 3.2 V24.6 Q0.9 26.9 3.2 26.9 H18.1 Q20.4 26.9 20.4 24.6 V9 H14.2 Q12.2 9 12.2 7 Z" fill="none" stroke="#1e1e1e" stroke-width="1.7" stroke-linejoin="round"/></svg>
<span class="t" style="left:45.88px;top:888.40px;font-size:20.5px;color:#242424;transform:scaleX(1.1156);transform-origin:0 0;">mqtt</span>
<span class="t" style="left:544.30px;top:888.40px;font-size:20.5px;color:#242424;letter-spacing:-0.901px;">101</span>
<span class="t" style="left:704.20px;top:888.40px;font-size:20.5px;color:#242424;letter-spacing:-0.120px;">websocket</span>
<span class="t" style="left:1240.80px;top:888.40px;font-size:20.5px;color:#242424;letter-spacing:0.000px;">0 B</span>
<span class="t" style="left:1356.48px;top:888.40px;font-size:20.5px;color:#242424;letter-spacing:0.000px;">1.6  Min</span>
<svg style="left:16.4px;top:920.75px" width="22" height="28" viewBox="0 0 22 28"><path d="M12.2 0.9 L20.4 9" fill="none" stroke="#4a4a4a" stroke-width="1.1"/><path d="M12.2 0.9 H3.2 Q0.9 0.9 0.9 3.2 V24.6 Q0.9 26.9 3.2 26.9 H18.1 Q20.4 26.9 20.4 24.6 V9 H14.2 Q12.2 9 12.2 7 Z" fill="none" stroke="#1e1e1e" stroke-width="1.7" stroke-linejoin="round"/></svg>
<span class="t" style="left:47.00px;top:925.15px;font-size:20.5px;color:#242424;letter-spacing:0.129px;">favicon-32x32.png</span>
<span class="t" style="left:544.30px;top:925.15px;font-size:20.5px;color:#242424;letter-spacing:-0.201px;">200</span>
<span class="t" style="left:702.12px;top:925.15px;font-size:20.5px;color:#242424;transform:scaleX(1.0792);transform-origin:0 0;">png</span>
<span class="t" style="left:863.30px;top:925.15px;font-size:20.5px;color:#717171;letter-spacing:-0.021px;">Andere</span>
<span class="t" style="left:1216.70px;top:925.15px;font-size:20.5px;color:#242424;letter-spacing:-0.649px;">1.7 kB</span>
<span class="t" style="left:1373.43px;top:925.15px;font-size:20.5px;color:#242424;letter-spacing:0.000px;">17 ms</span>
<svg style="left:16.4px;top:957.5px" width="22" height="28" viewBox="0 0 22 28"><path d="M12.2 0.9 L20.4 9" fill="none" stroke="#4a4a4a" stroke-width="1.1"/><path d="M12.2 0.9 H3.2 Q0.9 0.9 0.9 3.2 V24.6 Q0.9 26.9 3.2 26.9 H18.1 Q20.4 26.9 20.4 24.6 V9 H14.2 Q12.2 9 12.2 7 Z" fill="none" stroke="#1e1e1e" stroke-width="1.7" stroke-linejoin="round"/><path d="M13.6 2.4 V6.6 Q13.6 7.8 14.8 7.8 H18.6" stroke="#4a90e2" stroke-width="1" stroke-opacity="0.85" fill="none"/></svg>
<span class="t" style="left:47.00px;top:961.90px;font-size:20.5px;color:#242424;letter-spacing:0.194px;">settings/</span>
<span class="t" style="left:544.30px;top:961.90px;font-size:20.5px;color:#242424;letter-spacing:-0.201px;">200</span>
<span class="t" style="left:703.20px;top:961.90px;font-size:20.5px;color:#242424;letter-spacing:0.467px;">document</span>
<span class="t" style="left:863.30px;top:961.90px;font-size:20.5px;color:#242424;letter-spacing:-0.021px;">Andere</span>
<span class="t" style="left:1240.80px;top:961.90px;font-size:20.5px;color:#242424;letter-spacing:0.000px;">0 B</span>
<span class="t" style="left:1384.83px;top:961.90px;font-size:20.5px;color:#242424;letter-spacing:0.000px;">1 ms</span>
<span class="t" style="left:1445.40px;top:961.90px;font-size:20.5px;color:#2a2a2a;letter-spacing:-0.207px;">(disk cache)</span>
<svg style="left:16.4px;top:994.25px" width="22" height="28" viewBox="0 0 22 28"><path d="M12.2 0.9 L20.4 9" fill="none" stroke="#4a4a4a" stroke-width="1.1"/><path d="M12.2 0.9 H3.2 Q0.9 0.9 0.9 3.2 V24.6 Q0.9 26.9 3.2 26.9 H18.1 Q20.4 26.9 20.4 24.6 V9 H14.2 Q12.2 9 12.2 7 Z" fill="none" stroke="#1e1e1e" stroke-width="1.7" stroke-linejoin="round"/><path d="M13.6 2.4 V6.6 Q13.6 7.8 14.8 7.8 H18.6" stroke="#f0c040" stroke-width="1" stroke-opacity="0.85" fill="none"/></svg>
<span class="t" style="left:47.00px;top:998.65px;font-size:20.5px;color:#242424;letter-spacing:-0.061px;">chunk-vendors.5554053c.js</span>
<span class="t" style="left:544.30px;top:998.65px;font-size:20.5px;color:#242424;letter-spacing:-0.201px;">200</span>
<span class="t" style="left:703.20px;top:998.65px;font-size:20.5px;color:#242424;letter-spacing:0.164px;">script</span>
<span class="t" style="left:861.60px;top:998.65px;font-size:20.5px;color:#1369bf;letter-spacing:0.004px;text-decoration:underline;text-decoration-thickness:1.5px;text-underline-offset:1.8px">(Index)</span>
<span class="t" style="left:1240.80px;top:998.65px;font-size:20.5px;color:#242424;letter-spacing:0.000px;">0 B</span>
<span class="t" style="left:1373.43px;top:998.65px;font-size:20.5px;color:#242424;letter-spacing:0.000px;">20 ms</span>
<span class="t" style="left:1445.40px;top:998.65px;font-size:20.5px;color:#717171;letter-spacing:-0.207px;">(disk cache)</span>
<svg style="left:16.4px;top:1031.0px" width="22" height="28" viewBox="0 0 22 28"><path d="M12.2 0.9 L20.4 9" fill="none" stroke="#4a4a4a" stroke-width="1.1"/><path d="M12.2 0.9 H3.2 Q0.9 0.9 0.9 3.2 V24.6 Q0.9 26.9 3.2 26.9 H18.1 Q20.4 26.9 20.4 24.6 V9 H14.2 Q12.2 9 12.2 7 Z" fill="none" stroke="#1e1e1e" stroke-width="1.7" stroke-linejoin="round"/><path d="M13.6 2.4 V6.6 Q13.6 7.8 14.8 7.8 H18.6" stroke="#f0c040" stroke-width="1" stroke-opacity="0.85" fill="none"/></svg>
<span class="t" style="left:47.00px;top:1035.40px;font-size:20.5px;color:#242424;letter-spacing:-0.154px;">app.edb67225.js</span>
<span class="t" style="left:544.30px;top:1035.40px;font-size:20.5px;color:#242424;letter-spacing:-0.201px;">200</span>
<span class="t" style="left:703.20px;top:1035.40px;font-size:20.5px;color:#242424;letter-spacing:0.164px;">script</span>
<span class="t" style="left:861.60px;top:1035.40px;font-size:20.5px;color:#1369bf;letter-spacing:0.004px;text-decoration:underline;text-decoration-thickness:1.5px;text-underline-offset:1.8px">(Index)</span>
<span class="t" style="left:1240.80px;top:1035.40px;font-size:20.5px;color:#242424;letter-spacing:0.000px;">0 B</span>
<span class="t" style="left:1384.83px;top:1035.40px;font-size:20.5px;color:#242424;letter-spacing:0.000px;">2 ms</span>
<span class="t" style="left:1445.40px;top:1035.40px;font-size:20.5px;color:#717171;letter-spacing:-0.207px;">(disk cache)</span>
<div style="left:536px;top:347px;width:1px;height:717px;background:#cbcdd1;"></div>
<div style="left:694px;top:347px;width:1px;height:717px;background:#cbcdd1;"></div>
<div style="left:854px;top:347px;width:1px;height:717px;background:#cbcdd1;"></div>
<div style="left:1119px;top:347px;width:1px;height:717px;background:#cbcdd1;"></div>
<div style="left:1279px;top:347px;width:1px;height:717px;background:#cbcdd1;"></div>
<div style="left:1437px;top:347px;width:1px;height:717px;background:#cbcdd1;"></div>
<div style="left:1597px;top:347px;width:1px;height:717px;background:#c5c8ce;"></div>
<div style="left:1598px;top:347px;width:1px;height:717px;background:#fff;"></div>
<div style="left:1599px;top:394px;width:1px;height:670px;background:#e2e2e2;"></div>
<div style="left:1783px;top:394px;width:1px;height:670px;background:rgba(0,0,0,0.13);"></div>
<div style="left:1915px;top:394px;width:1px;height:670px;background:#1761c9;"></div>
<div style="left:1916px;top:394px;width:1px;height:670px;background:#4a5fb4;"></div>
<div style="left:1917px;top:394px;width:1px;height:670px;background:#fdfdfd;"></div>
<div style="left:1918px;top:394px;width:12px;height:670px;background:#f1f1f1;"></div>
<div style="left:1920px;top:826px;width:10px;height:210px;background:#c1c1c1;"></div>
<svg style="left:1917px;top:404px" width="13" height="12" viewBox="0 0 13 12"><path d="M8.9 8.8 L13 4.7 V8.8 Z" fill="#505050"/></svg>
<svg style="left:1917px;top:1043px" width="13" height="12" viewBox="0 0 13 12"><path d="M8.9 3 H13 V7 Z" fill="#a0a0a0"/></svg>
<div style="left:1740.9px;top:417.25px;width:3.1px;height:8.8px;background:#d0d0d0;"></div>
<div style="left:1745.6px;top:412.0px;width:4.1px;height:19.2px;background:#12a5f0;border-radius:0.8px"></div>
<div style="left:1740.9px;top:454.25px;width:3.1px;height:8.8px;background:#d0d0d0;"></div>
<div style="left:1745.6px;top:449.0px;width:4.1px;height:19.2px;background:#12a5f0;border-radius:0.8px"></div>
<div style="left:1742.4px;top:491.25px;width:3.1px;height:8.8px;background:#d0d0d0;"></div>
<div style="left:1745.8px;top:484.25px;width:1.8px;height:22.8px;background:#18a038;"></div>
<div style="left:1747.6px;top:486.25px;width:3.7px;height:18.8px;background:#12a5f0;"></div>
<div style="left:1742.4px;top:528.25px;width:3.1px;height:8.8px;background:#d0d0d0;"></div>
<div style="left:1745.8px;top:521.25px;width:1.8px;height:22.8px;background:#18a038;"></div>
<div style="left:1747.6px;top:523.25px;width:3.7px;height:18.8px;background:#12a5f0;"></div>
<div style="left:1742.4px;top:565.5px;width:3.1px;height:8.8px;background:#d0d0d0;"></div>
<div style="left:1747.6px;top:560.25px;width:3.7px;height:19.2px;background:#12a5f0;border-radius:0.8px"></div>
<div style="left:1742.4px;top:602.5px;width:3.1px;height:8.8px;background:#d0d0d0;"></div>
<div style="left:1747.6px;top:597.25px;width:3.7px;height:19.2px;background:#12a5f0;border-radius:0.8px"></div>
<div style="left:1742.4px;top:639.5px;width:3.1px;height:8.8px;background:#d0d0d0;"></div>
<div style="left:1747.6px;top:634.25px;width:3.7px;height:19.2px;background:#12a5f0;border-radius:0.8px"></div>
<div style="left:1742.4px;top:676.5px;width:3.1px;height:8.8px;background:#d0d0d0;"></div>
<div style="left:1747.6px;top:671.25px;width:3.7px;height:19.2px;background:#12a5f0;border-radius:0.8px"></div>
<div style="left:1742.4px;top:713.5px;width:3.1px;height:8.8px;background:#d0d0d0;"></div>
<div style="left:1747.6px;top:708.5px;width:3.7px;height:19.2px;background:#12a5f0;border-radius:0.8px"></div>
<div style="left:1742.4px;top:750.75px;width:3.1px;height:8.8px;background:#d0d0d0;"></div>
<div style="left:1747.6px;top:745.5px;width:3.7px;height:19.2px;background:#12a5f0;border-radius:0.8px"></div>
<div style="left:1742.4px;top:787.75px;width:3.1px;height:8.8px;background:#d0d0d0;"></div>
<div style="left:1747.6px;top:782.5px;width:3.7px;height:19.2px;background:#12a5f0;border-radius:0.8px"></div>
<div style="left:1742.4px;top:824.75px;width:3.1px;height:8.8px;background:#d0d0d0;"></div>
<div style="left:1747.6px;top:819.5px;width:3.7px;height:19.2px;background:#12a5f0;border-radius:0.8px"></div>
<div style="left:1742.4px;top:861.75px;width:3.1px;height:8.8px;background:#d0d0d0;"></div>
<div style="left:1747.6px;top:856.5px;width:3.7px;height:19.2px;background:#12a5f0;border-radius:0.8px"></div>
<div style="left:1744.2px;top:896.75px;width:170.8px;height:12.2px;background:#888888;"></div>
<div style="left:1742.4px;top:936.0px;width:3.1px;height:8.8px;background:#d0d0d0;"></div>
<div style="left:1747.6px;top:930.75px;width:3.7px;height:19.2px;background:#12a5f0;border-radius:0.8px"></div>
<div style="left:4px;top:1064px;width:1926px;height:1px;background:#cbcdd1;"></div>
<div style="left:4px;top:1065px;width:1926px;height:49px;background:#f8f8f8;"></div>
<span class="t" style="left:24.20px;top:1082.90px;font-size:20.5px;color:#242424;letter-spacing:0.291px;">53 Anforderungen</span>
<span class="t" style="left:204.60px;top:1082.90px;font-size:20.5px;color:#242424;letter-spacing:0.067px;">21.6 kB übertragen</span>
<span class="t" style="left:392.60px;top:1082.90px;font-size:20.5px;color:#242424;letter-spacing:-0.247px;">7.3 MB-Ressourcen</span>
<span class="t" style="left:581.50px;top:1082.90px;font-size:20.5px;color:#242424;letter-spacing:0.024px;">Fertig stellen: 28 ms</span>
<span class="t" style="left:778.90px;top:1082.90px;font-size:20.5px;color:#2323a8;letter-spacing:0.096px;">DOMContentLoaded: 464 ms</span>
<span class="t" style="left:1059.70px;top:1082.90px;font-size:20.5px;color:#c5161d;letter-spacing:-0.198px;">Laden: 578 ms</span>
</body></html>
